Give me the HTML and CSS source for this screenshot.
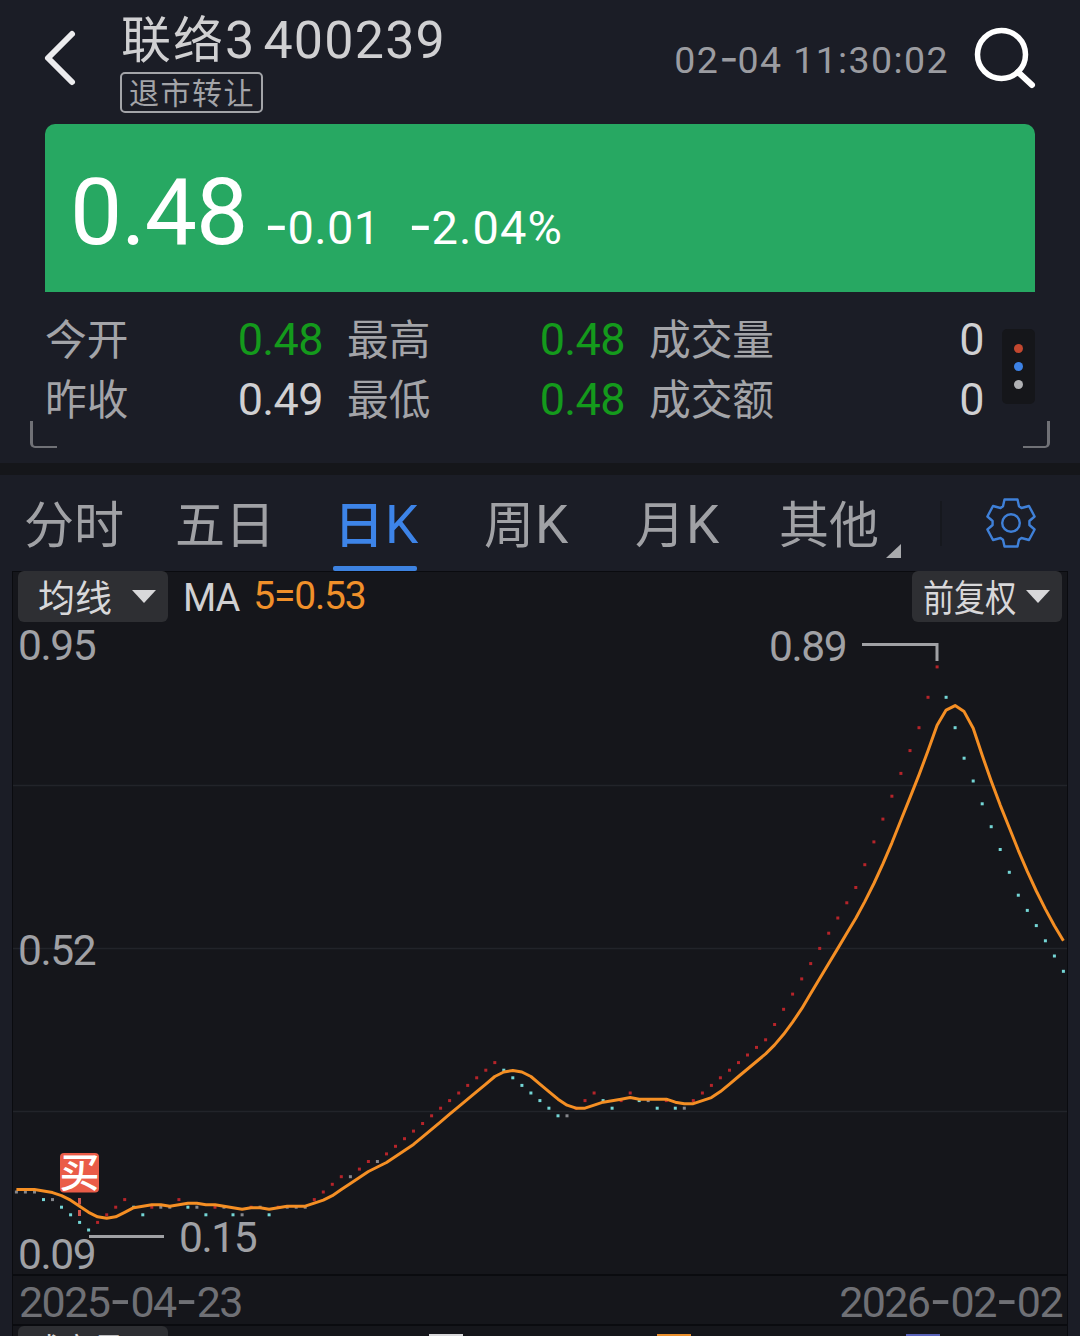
FILE: index.html
```
<!DOCTYPE html>
<html lang="zh-CN">
<head>
<meta charset="utf-8">
<title>联络3 400239</title>
<link rel="stylesheet" href="styles.css">
</head>
<body>
<div class="app">
  <header class="header">
    <svg class="back" width="36" height="60" viewBox="0 0 36 60"><path d="M30 6L6 30L30 54"/></svg>
    <div class="stock">
      <div class="stock-name"><span class="cn">联络</span><span>3</span><span class="code">400239</span></div>
      <div class="tag">退市转让</div>
    </div>
    <div class="time">02<span class="dash">-</span>04 11:30:02</div>
    <svg class="search" width="64" height="64" viewBox="0 0 64 64"><circle cx="29.5" cy="28.5" r="24"/><path d="M46 46L60 59"/></svg>
  </header>

  <section class="quote">
    <span class="price">0.48</span>
    <span class="change"><span class="dash">-</span>0.01</span>
    <span class="percent"><span class="dash">-</span>2.04%</span>
  </section>

  <section class="stats">
    <div class="stats-grid">
      <span class="label">今开</span><span class="value down">0.48</span>
      <span class="label gap">最高</span><span class="value down">0.48</span>
      <span class="label gap">成交量</span><span class="value">0</span>
      <span class="label">昨收</span><span class="value">0.49</span>
      <span class="label gap">最低</span><span class="value down">0.48</span>
      <span class="label gap">成交额</span><span class="value">0</span>
    </div>
    <div class="more"><i class="dot red"></i><i class="dot blue"></i><i class="dot gray"></i></div>
    <i class="corner corner-left"></i>
    <i class="corner corner-right"></i>
  </section>

  <nav class="tabs">
    <span class="tab">分时</span>
    <span class="tab">五日</span>
    <span class="tab active">日<b>K</b></span>
    <span class="tab">周<b>K</b></span>
    <span class="tab">月<b>K</b></span>
    <span class="tab other">其他</span>
    <span class="divider"></span>
    <svg class="gear" width="52" height="52" viewBox="-26 -26 52 52">
      <path d="M-6.5-23.5H6.5L8-16.8L10.5-15L18-17L23.6-6.5L18.4-2V2L23.6 6.5L18 17L10.5 15L8 16.8L6.5 23.5H-6.5L-8 16.8L-10.5 15L-18 17L-23.6 6.5L-18.4 2V-2L-23.6-6.5L-18-17L-10.5-15L-8-16.8Z"/>
      <circle r="8.8"/>
    </svg>
  </nav>

  <main class="panel">
    <div class="toolbar">
      <div class="select"><span class="cn">均线</span><i class="caret"></i></div>
      <span class="ma">MA</span>
      <span class="ma-value">5=0.53</span>
      <div class="select adjust"><span class="cn narrow">前复权</span><i class="caret"></i></div>
    </div>
    <svg class="chart" width="1054" height="652" viewBox="13 622 1054 652">
      <g class="grid"><path d="M13 785.5H1067M13 948.5H1067M13 1111.5H1067"/></g>
      <g class="axis">
        <text x="18" y="660">0.95</text>
        <text x="18" y="965">0.52</text>
        <text x="18" y="1268.5">0.09</text>
        <text x="769" y="661">0.89</text>
        <text x="179" y="1252">0.15</text>
      </g>
      <path class="pointer" d="M862 644.5H937V661M89 1236.5H164"/>
      <g id="prices"></g>
      <path class="buy-line" d="M79.5 1198V1216"/>
      <polyline id="ma5" class="ma-line"/>
      <rect class="buy-box" x="60" y="1153" width="39" height="39.5" rx="4"/>
      <text class="buy-text" x="79.5" y="1187">买</text>
    </svg>
    <div class="dates">
      <span>2025<span class="dash">-</span>04<span class="dash">-</span>23</span>
      <span>2026<span class="dash">-</span>02<span class="dash">-</span>02</span>
    </div>
    <div class="volume">
      <div class="select"><span class="cn narrow">成交量</span></div>
      <i class="sliver white"></i><i class="sliver orange"></i><i class="sliver indigo"></i>
    </div>
  </main>
</div>
<script src="chart.js"></script>
</body>
</html>
```
FILE: styles.css
```
* { box-sizing: border-box; }
body {
  margin: 0;
  background: #1b1d26;
  color: #d0d0d2;
  font-family: Roboto, "Noto Sans CJK SC", sans-serif;
}
i { font-style: normal; }
b { font-weight: 400; }
.app { width: 1080px; height: 1336px; overflow: hidden; display: flex; flex-direction: column; }
.cn { font-family: "Noto Sans CJK SC", sans-serif; }
.dash { font-family: Inter, sans-serif; font-size: 1.12em; line-height: 0; letter-spacing: -1px; }

.header { height: 124px; flex: none; display: flex; padding: 0 44px 0 42px; }
.back { margin-top: 28px; flex: none; }
.back path { fill: none; stroke: #ececee; stroke-width: 6; stroke-linecap: round; stroke-linejoin: round; }
.stock { margin-left: 42px; width: 400px; }
.stock-name { display: flex; align-items: baseline; height: 72px; font-size: 52px; line-height: 81px; letter-spacing: 1.2px; white-space: nowrap; }
.stock-name .cn { font-size: 50px; line-height: 60px; letter-spacing: 2px; margin-left: 1px; }
.stock-name .code { margin-left: 8px; }
.tag {
  width: 143px; height: 41px; border: 2px solid #a3a4a8; border-radius: 5px;
  color: #a3a4a8; font: 30px/35px "Noto Sans CJK SC", sans-serif; letter-spacing: 1.5px; padding-left: 7px; white-space: nowrap;
}
.time { margin-left: auto; font-size: 37.5px; line-height: 121px; letter-spacing: 1.4px; color: #9b9ca1; white-space: nowrap; }
.search { margin: 26px 0 0 23px; flex: none; }
.search circle { fill: none; stroke: #fff; stroke-width: 5.5; }
.search path { fill: none; stroke: #fff; stroke-width: 6; stroke-linecap: round; }

.quote {
  height: 168px; flex: none; margin: 0 45px; padding-left: 25px; display: flex; align-items: baseline;
  background: #27a862; border-radius: 10px 10px 0 0; color: #fff; white-space: nowrap;
}
.price { font-size: 93px; line-height: 177px; letter-spacing: -1px; }
.change { font-size: 47px; letter-spacing: .3px; margin-left: 17px; width: 144px; }
.percent { font-size: 47px; letter-spacing: 1.1px; }

.stats { height: 171px; flex: none; position: relative; display: flex; padding: 18px 45px 0; }
.stats-grid {
  display: grid; width: 939px; height: 120px; white-space: nowrap;
  grid-template-columns: 120px 158px 143px 159px 170px 189px;
  grid-template-rows: 60px 60px;
}
.label { font: 41.7px/54px "Noto Sans CJK SC", sans-serif; color: #a3a4a8; }
.label.gap { padding-left: 24px; }
.value { font-size: 45px; line-height: 60px; text-align: right; letter-spacing: -.6px; }
.down { color: #149a1c; }
.more {
  width: 33px; height: 75px; margin: 19px 0 0 18px; border-radius: 5px; background: #15161a;
  display: flex; flex-direction: column; align-items: center; justify-content: center; gap: 9px;
}
.dot { width: 9px; height: 9px; border-radius: 50%; }
.red { background: #c2472f; }
.blue { background: #3d82e6; }
.gray { background: #b0b1b4; }
.corner { position: absolute; top: 129px; width: 27px; height: 27px; border-bottom: 2px solid #707176; }
.corner-left { left: 30px; border-left: 3px solid #707176; border-bottom-left-radius: 5px; }
.corner-right { right: 30px; border-right: 3px solid #707176; border-bottom-right-radius: 5px; }

.tabs {
  height: 108px; flex: none; border-top: 12px solid #15161a; display: flex; position: relative;
  padding-left: 24px; white-space: nowrap;
}
.tab { position: relative; width: 151px; height: 96px; font: 50px/92px "Noto Sans CJK SC", sans-serif; color: #a0a1a5; flex: none; }
.tab b { font: 53px/60px Roboto, sans-serif; margin-left: 1px; }
.tab:nth-child(3) { padding-left: 8px; }
.tab:nth-child(4) { padding-left: 7px; }
.tab:nth-child(5) { padding-left: 7px; }
.tab.active { color: #3d84e8; font-weight: 500; }
.tab.active::after { content: ""; position: absolute; left: 7px; top: 91px; width: 84px; height: 5px; border-radius: 2px; background: #3d82e0; }
.tab.other { width: 161px; }
.tab.other::after { content: ""; position: absolute; left: 107px; top: 69px; border-left: 15px solid transparent; border-bottom: 14px solid #a9aaad; }
.divider { width: 2px; height: 45px; margin-top: 26px; background: #16181e; }
.gear { margin: 22px 0 0 43px; }
.gear path, .gear circle { fill: none; stroke: #3f80d8; stroke-width: 2.4; stroke-linejoin: round; }

.panel { flex: 1; margin: 0 12px; background: #15161b; border: 1px solid #0a0b0f; border-bottom: 0; min-height: 0; }
.toolbar { height: 50px; display: flex; align-items: flex-start; padding: 0 5px; white-space: nowrap; }
.select {
  width: 150px; height: 51px; margin-top: -1px; border-radius: 6px; background: #2e2f33; color: #d8d8da;
  display: flex; align-items: center; padding-left: 20px; font-size: 37px; line-height: 51px; flex: none;
}
.select .narrow { width: 92px; transform: scaleX(.84); transform-origin: left; white-space: nowrap; }
.adjust { margin-left: auto; padding-left: 11px; }
.caret { border: 12px solid transparent; border-top: 13px solid #d8d8da; border-bottom: 0; margin-left: 20px; }
.adjust .caret { margin-left: 11px; }
.ma { font-size: 38px; line-height: 52px; letter-spacing: -1px; margin-left: 15px; }
.ma-value { font-size: 39px; line-height: 48px; letter-spacing: -1.2px; color: #f0902a; margin-left: 14px; }
.chart { display: block; overflow: visible; }
.grid path { fill: none; stroke: #22242a; stroke-width: 1.5; }
.axis text { font-size: 42.5px; letter-spacing: -1.4px; fill: #a0a1a5; }
.pointer { fill: none; stroke: #a0a1a5; stroke-width: 3; }
.ma-line { fill: none; stroke: #f58f24; stroke-width: 3; stroke-linejoin: round; }
.up-dot { fill: #b5242a; }
.down-dot { fill: #74d6d6; }
.flat-dot { fill: #86878c; }
.buy-line { stroke: #d2554b; stroke-width: 3; stroke-dasharray: 6.5 5.5; }
.buy-box { fill: #ea5c48; }
.buy-text { font: 500 40px "Noto Sans CJK SC", sans-serif; fill: #fff; text-anchor: middle; }
.dates {
  height: 52px; border-top: 2px solid #0a0b0f; border-bottom: 2px solid #0a0b0f; display: flex;
  justify-content: space-between; padding: 0 5px 0 6px; font-size: 43px; line-height: 53px; letter-spacing: -1.6px; color: #6f7075;
}
.volume { height: 12px; display: flex; align-items: flex-start; padding-left: 5px; overflow: hidden; }
.volume .select { margin-top: 0; padding-left: 13px; border-radius: 6px; line-height: 49px; align-items: flex-start; }
.sliver { width: 34px; height: 2px; margin-top: 8px; flex: none; }
.sliver.white { background: #d8d8da; margin-left: 261px; }
.sliver.orange { background: #ea8f2c; margin-left: 194px; }
.sliver.indigo { background: #5862b8; margin-left: 215px; }
```
FILE: chart.js
```
// Daily closes in hundredths above 0.15
const closes = [
  5,5,5,4,4,3,2,1,0,1,2,3,4,3,2,3,3,3,4,3,3,2,3,3,2,2,3,3,2,3,3,3,3,
  4,5,6,7,7,8,9,9,10,11,12,13,14,15,16,17,18,19,20,21,22,21,20,19,18,17,16,15,15,
  16,17,18,17,16,17,18,17,17,16,17,16,16,17,18,19,20,21,22,23,24,25,
  27,29,31,33,35,37,39,41,43,45,48,51,54,57,60,63,66,70,74,
  70,66,62,59,56,53,50,47,44,42,40,38,36,34
];
const history = [5, 5, 5, 5];
const all = history.concat(closes);
const px = i => 16.4 + i * 9.026;
const py = v => 1230 - v * 7.61;
// The average line keeps a small inset from the top and bottom of the plot
const inset = y => y + (940 - y) * 0.0092;

const group = document.getElementById('prices');
const points = [];
closes.forEach((v, i) => {
  const prev = i ? closes[i - 1] : v;
  const dot = document.createElementNS('http://www.w3.org/2000/svg', 'rect');
  dot.setAttribute('x', (px(i) - 1.5).toFixed(1));
  dot.setAttribute('y', (py(v) - 1.5).toFixed(1));
  dot.setAttribute('width', 3);
  dot.setAttribute('height', 3);
  dot.setAttribute('class', v > prev ? 'up-dot' : v < prev ? 'down-dot' : 'flat-dot');
  group.appendChild(dot);
  const mean = all.slice(i, i + 5).reduce((a, b) => a + b, 0) / 5;
  points.push(px(i).toFixed(1) + ',' + inset(py(mean)).toFixed(1));
});
document.getElementById('ma5').setAttribute('points', points.join(' '));
```
